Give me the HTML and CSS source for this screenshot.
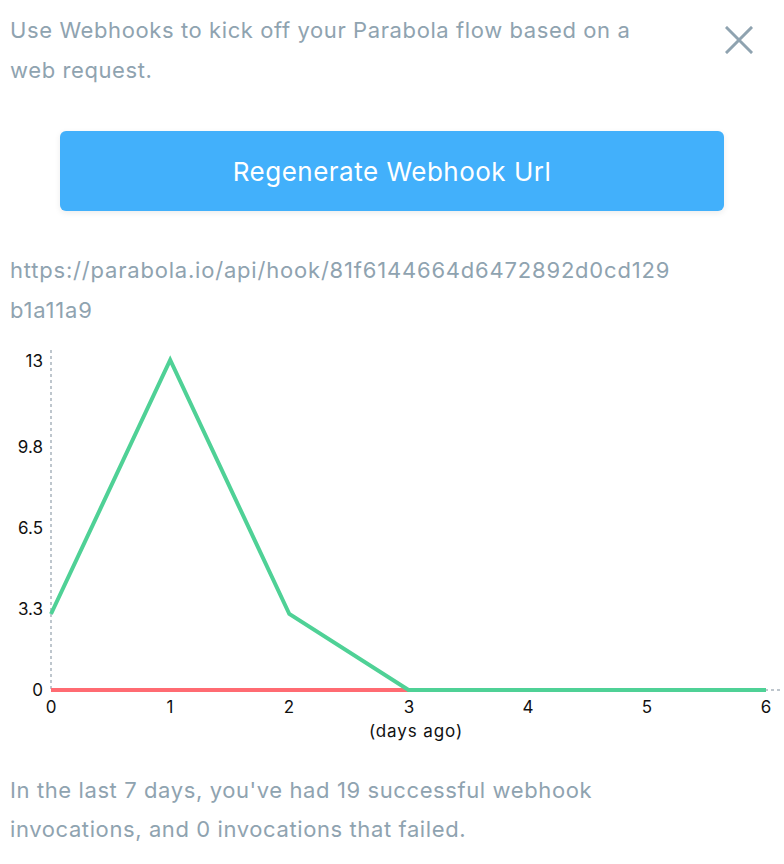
FILE: index.html
```html
<!DOCTYPE html>
<html lang="en">
<head>
    <meta charset="UTF-8">
    <meta name="viewport" content="width=device-width, initial-scale=1.0">
    <title>Webhook</title>
    <link rel="stylesheet" href="styles.css">
</head>
<body>
    <div class="webhook-panel">
        <div class="panel-header">
            <p class="description">Use Webhooks to kick off your Parabola flow based on a web request.</p>
            <button class="close-btn" aria-label="Close">
                <svg width="28" height="28" viewBox="0 0 28 28">
                    <path d="M2 2 L26 26 M26 2 L2 26" stroke="#8fa3b0" stroke-width="3" stroke-linecap="square" fill="none"/>
                </svg>
            </button>
        </div>

        <button class="btn">Regenerate Webhook Url</button>

        <p class="hook-url">https://parabola.io/api/hook/81f6144664d6472892d0cd129b1a11a9</p>

        <svg class="chart" width="784" height="441" viewBox="0 0 784 441">
            <!-- axes -->
            <line x1="51" y1="20" x2="51" y2="360" class="axis"/>
            <line x1="51" y1="360" x2="782" y2="360" class="axis"/>

            <!-- y ticks -->
            <text x="43" y="37" class="tick" text-anchor="end">13</text>
            <text x="43" y="123" class="tick" text-anchor="end">9.8</text>
            <text x="43" y="204" class="tick" text-anchor="end">6.5</text>
            <text x="43" y="285" class="tick" text-anchor="end">3.3</text>
            <text x="43" y="366" class="tick" text-anchor="end">0</text>

            <!-- x ticks -->
            <text x="51" y="383" class="tick" text-anchor="middle">0</text>
            <text x="170" y="383" class="tick" text-anchor="middle">1</text>
            <text x="289" y="383" class="tick" text-anchor="middle">2</text>
            <text x="409" y="383" class="tick" text-anchor="middle">3</text>
            <text x="528" y="383" class="tick" text-anchor="middle">4</text>
            <text x="647" y="383" class="tick" text-anchor="middle">5</text>
            <text x="766" y="383" class="tick" text-anchor="middle">6</text>
            <text x="416" y="407" class="tick label" text-anchor="middle">(days ago)</text>

            <!-- failed -->
            <polyline class="series failed" points="51,360 170.2,360 289.3,360 408.5,360 527.7,360 646.8,360 766,360"/>
            <!-- successful -->
            <polyline class="series success" points="51,284 170.2,30 289.3,284 408.5,360 527.7,360 646.8,360 766,360"/>
        </svg>

        <p class="summary">In the last 7 days, you've had 19 successful webhook invocations, and 0 invocations that failed.</p>
    </div>
</body>
</html>
```

FILE: styles.css
```css
/* General Styles */
body {
    margin: 0;
    padding: 0;
    font-family: Inter, "Noto Sans", sans-serif;
    background: #fff;
    color: #8fa3b0;
}

.webhook-panel {
    width: 784px;
    padding: 10px 10px 0;
    box-sizing: border-box;
}

.panel-header {
    display: flex;
    justify-content: space-between;
    align-items: flex-start;
}

.description,
.hook-url,
.summary {
    margin: 0;
    font-size: 22px;
    line-height: 40px;
    letter-spacing: 0.6px;
    max-width: 656px;
}

.summary {
    line-height: 39px;
}

.hook-url {
    margin-top: 39px;
    max-width: 666px;
    letter-spacing: 0.8px;
    word-break: break-all;
}

.close-btn {
    background: none;
    border: none;
    padding: 0;
    margin: 16px 21px 0 0;
    width: 28px;
    height: 28px;
    flex-shrink: 0;
    cursor: pointer;
}

.close-btn svg {
    display: block;
}

.btn {
    display: block;
    width: 664px;
    height: 80px;
    margin: 41px auto 0;
    background: #42b0fb;
    color: #fff;
    border: none;
    border-radius: 6px;
    font-family: inherit;
    font-size: 26px;
    letter-spacing: 0.5px;
    box-shadow: 0 2px 6px rgba(0, 0, 0, 0.08);
    cursor: pointer;
}

.chart {
    display: block;
    margin: 0 -10px;
}

.axis {
    stroke: #a9b4bd;
    stroke-width: 1.5;
    stroke-dasharray: 3 3;
}

.tick {
    font-family: Inter, "Noto Sans", sans-serif;
    font-size: 17px;
    fill: #111;
}

.tick.label {
    letter-spacing: 0.9px;
}

.series {
    fill: none;
    stroke-width: 4;
    stroke-linejoin: miter;
}

.failed {
    stroke: #ff6b72;
}

.success {
    stroke: #4fd196;
}
```
